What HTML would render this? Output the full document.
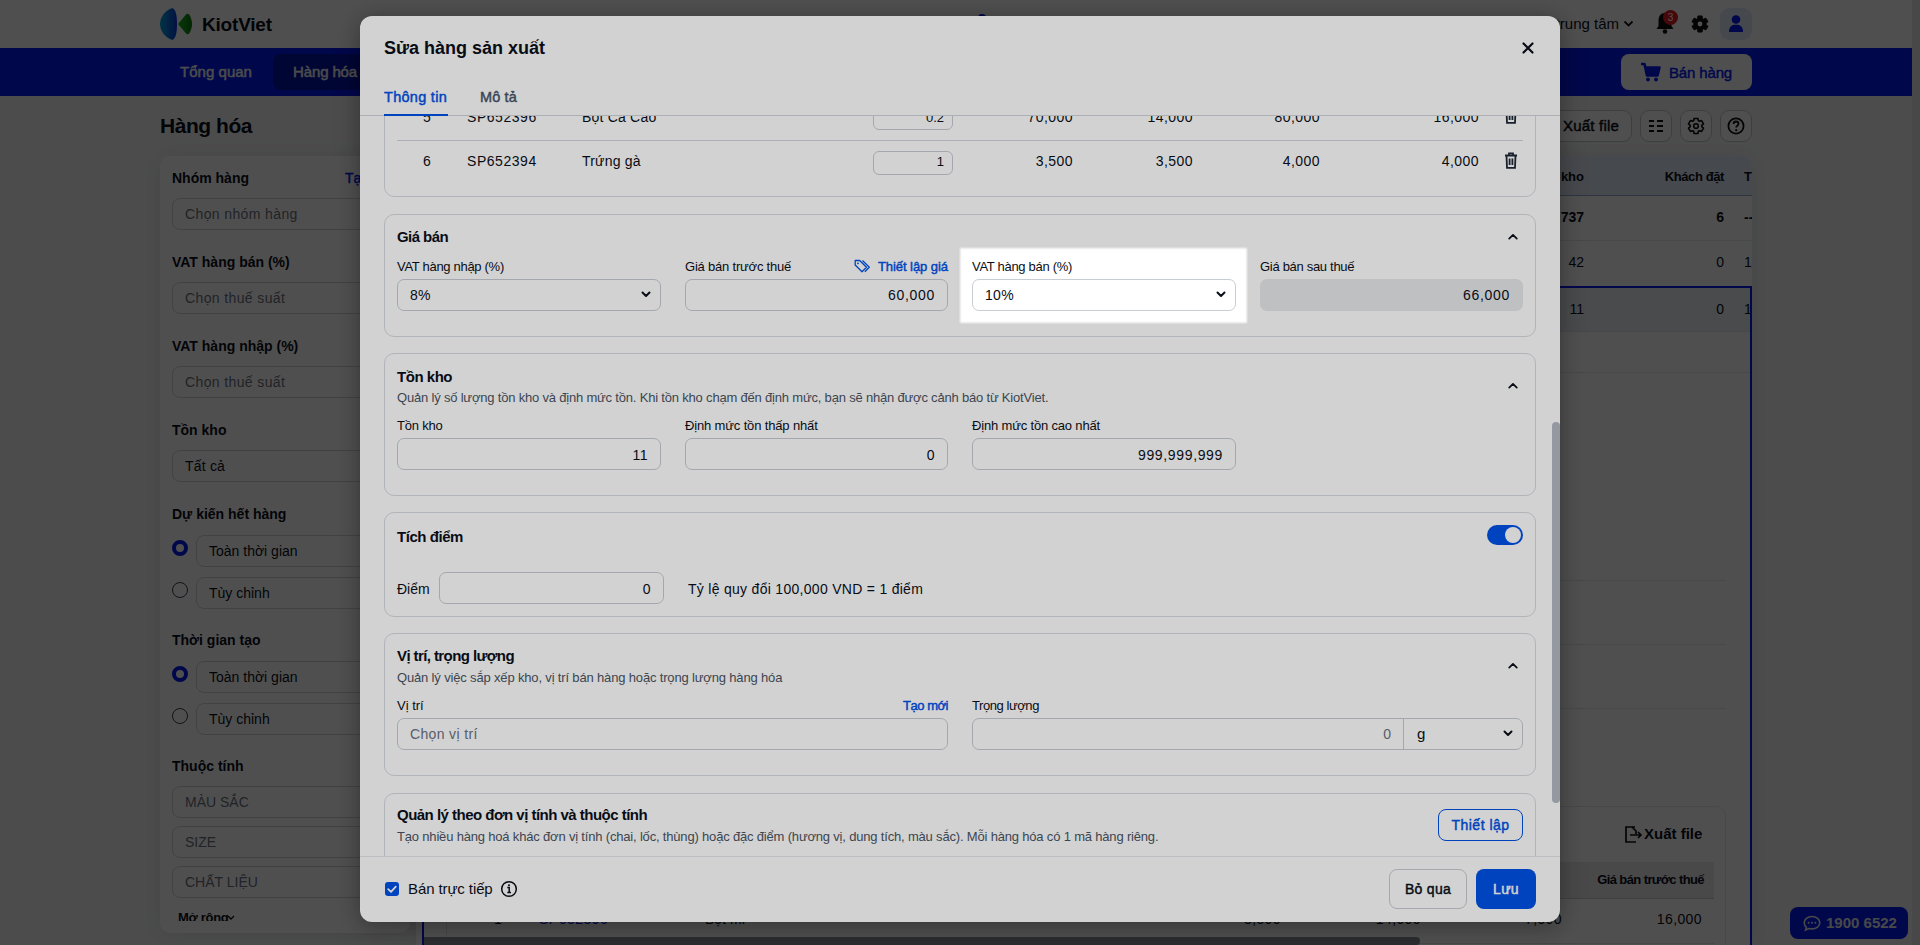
<!DOCTYPE html>
<html><head><meta charset="utf-8"><title>KiotViet</title>
<style>
html,body{margin:0;padding:0;width:1920px;height:945px;overflow:hidden;background:#fff;}
body{position:relative;font-family:"Liberation Sans",sans-serif;}
.a{position:absolute;}
.t{white-space:nowrap;}
#page{position:absolute;left:0;top:0;width:1920px;height:945px;z-index:0;}
svg{overflow:visible;}
</style></head><body>
<div id="page">
<div class="a " style="left:0px;top:0px;width:1912px;height:48px;background:#ffffff;"></div>
<svg class="a" style="left:160px;top:8px;" width="34" height="33" viewBox="0 0 34 33"><defs><linearGradient id="lg1" x1="0" y1="0" x2="1" y2="0"><stop offset="0" stop-color="#07a6e0"/><stop offset="1" stop-color="#0a3cd2"/></linearGradient><linearGradient id="lg2" x1="0" y1="0" x2="1" y2="0"><stop offset="0" stop-color="#1fb51f"/><stop offset="1" stop-color="#077a0c"/></linearGradient></defs><path d="M12.5 0 C5 2.5 0 9 0 16 C0 23 5 29.5 12.5 32 C16 30 17 24 17 16 C17 8 16 2 12.5 0 Z" fill="url(#lg1)"/><path d="M18 16 L26 6.5 C27 5.5 28.5 5.5 29.5 7 C31.2 10 32 13 32 16 C32 19 31.2 22 29.5 25 C28.5 26.5 27 26.5 26 25.5 Z" fill="url(#lg2)"/></svg>
<div class="a t" style="left:202.00px;top:14.91px;width:1000px;height:19px;line-height:19px;font-size:19px;font-weight:700;color:#0b0f19;text-align:left;letter-spacing:-0.2px;">KiotViet</div>
<div class="a t" style="left:1319.00px;top:16.30px;width:300px;height:15px;line-height:15px;font-size:15px;font-weight:400;color:#0b0f19;text-align:right;letter-spacing:0px;">Chi nhánh trung tâm</div>
<svg class="a" style="left:1623px;top:20px;" width="11" height="8" viewBox="0 0 11 8"><path d="M1.5 1.5 L5.5 5.5 L9.5 1.5" stroke="#111" stroke-width="1.8" fill="none"/></svg>
<svg class="a" style="left:1654px;top:8px;" width="22" height="28" viewBox="0 0 22 28"><path d="M11 5 C6.5 5 4.5 8.5 4.5 12.5 L4.5 18 L2.5 21 L19.5 21 L17.5 18 L17.5 12.5 C17.5 8.5 15.5 5 11 5 Z" fill="#111"/><circle cx="11" cy="23.5" r="2.3" fill="#111"/></svg>
<div class="a " style="left:1663px;top:10px;width:15px;height:15px;background:#e01b24;border-radius:50%;"></div>
<div class="a t" style="left:1663.00px;top:13.03px;width:15px;height:10px;line-height:10px;font-size:10px;font-weight:400;color:#ffffff;text-align:center;letter-spacing:0px;">3</div>
<svg class="a" style="left:1691px;top:15px;" width="18" height="18" viewBox="0 0 18 18"><path d="M6.55 3.52 L6.95 0.96 L11.05 0.96 L11.45 3.52 L12.52 4.14 L14.94 3.20 L16.99 6.76 L14.97 8.38 L14.97 9.62 L16.99 11.24 L14.94 14.80 L12.52 13.86 L11.45 14.48 L11.05 17.04 L6.95 17.04 L6.55 14.48 L5.48 13.86 L3.06 14.80 L1.01 11.24 L3.03 9.62 L3.03 8.38 L1.01 6.76 L3.06 3.20 L5.48 4.14 Z" fill="#111" stroke="#111" stroke-width="1" stroke-linejoin="round"/><circle cx="9" cy="9" r="2.4" fill="#fff"/></svg>
<div class="a " style="left:1720px;top:8px;width:32px;height:32px;background:#dde6f5;border-radius:9px;"></div>
<svg class="a" style="left:1728px;top:15px;" width="16" height="17" viewBox="0 0 16 17"><circle cx="8" cy="4.5" r="4.3" fill="#0019ef"/><path d="M1 17 C1 11.5 4 9.8 8 9.8 C12 9.8 15 11.5 15 17 Z" fill="#0019ef"/></svg>
<div class="a " style="left:978px;top:14px;width:8px;height:8px;background:#0019ef;border-radius:50%;"></div>
<div class="a " style="left:0px;top:48px;width:1912px;height:48px;background:#0019ef;"></div>
<div class="a t" style="left:180.00px;top:64.30px;width:1000px;height:15px;line-height:15px;font-size:15px;font-weight:400;color:#f3f4f6;text-align:left;letter-spacing:0.03px;-webkit-text-stroke:0.45px #f3f4f6;">Tổng quan</div>
<div class="a " style="left:273px;top:54px;width:110px;height:36px;background:#0016a8;border-radius:8px;"></div>
<div class="a t" style="left:293.00px;top:64.30px;width:1000px;height:15px;line-height:15px;font-size:15px;font-weight:400;color:#f3f4f6;text-align:left;letter-spacing:-0.13px;-webkit-text-stroke:0.45px #f3f4f6;">Hàng hóa</div>
<div class="a " style="left:1621px;top:54px;width:131px;height:36px;background:#ffffff;border-radius:8px;"></div>
<svg class="a" style="left:1640px;top:62px;" width="21" height="20" viewBox="0 0 21 20"><path d="M1 2 H4.5 L7 13.5 H17.5 L19.5 5.5 H5.5" stroke="#0019ef" stroke-width="2.6" fill="none" stroke-linejoin="round"/><path d="M5.5 5.5 H19.5 L17.5 13.5 H7 Z" fill="#0019ef"/><circle cx="8" cy="17.5" r="1.9" fill="#0019ef"/><circle cx="16" cy="17.5" r="1.9" fill="#0019ef"/></svg>
<div class="a t" style="left:1669.00px;top:64.80px;width:1000px;height:15px;line-height:15px;font-size:15px;font-weight:400;color:#0019ef;text-align:left;letter-spacing:-0.15px;-webkit-text-stroke:0.45px #0019ef;">Bán hàng</div>
<div class="a " style="left:0px;top:96px;width:1912px;height:849px;background:#f4f5f7;"></div>
<div class="a " style="left:1912px;top:0px;width:8px;height:945px;background:#e6e6e6;"></div>
<div class="a t" style="left:160.00px;top:115.22px;width:1000px;height:21px;line-height:21px;font-size:21px;font-weight:700;color:#0b0f19;text-align:left;letter-spacing:-0.46px;">Hàng hóa</div>
<div class="a " style="left:1500px;top:110px;width:132px;height:32px;background:#fff;border:1px solid #c2c7cf;border-radius:9px;box-sizing:border-box;"></div>
<div class="a t" style="left:1563.00px;top:118.30px;width:1000px;height:15px;line-height:15px;font-size:15px;font-weight:400;color:#0b0f19;text-align:left;letter-spacing:0.2px;-webkit-text-stroke:0.45px #0b0f19;">Xuất file</div>
<div class="a " style="left:1640px;top:110px;width:32px;height:32px;background:#fff;border:1px solid #c2c7cf;border-radius:9px;box-sizing:border-box;"></div>
<div class="a " style="left:1680px;top:110px;width:32px;height:32px;background:#fff;border:1px solid #c2c7cf;border-radius:9px;box-sizing:border-box;"></div>
<div class="a " style="left:1720px;top:110px;width:32px;height:32px;background:#fff;border:1px solid #c2c7cf;border-radius:9px;box-sizing:border-box;"></div>
<svg class="a" style="left:1648px;top:118px;" width="16" height="16" viewBox="0 0 16 16"><g fill="#111"><rect x="1" y="2" width="5" height="2"/><rect x="9" y="2" width="6" height="2"/><rect x="1" y="7" width="5" height="2"/><rect x="9" y="7" width="6" height="2"/><rect x="1" y="12" width="5" height="2"/><rect x="9" y="12" width="6" height="2"/></g></svg>
<svg class="a" style="left:1687px;top:117px;" width="18" height="18" viewBox="0 0 18 18"><path d="M6.63 3.70 L7.07 1.44 L10.93 1.44 L11.37 3.70 L12.40 4.30 L14.58 3.55 L16.51 6.89 L14.77 8.40 L14.77 9.60 L16.51 11.11 L14.58 14.45 L12.40 13.70 L11.37 14.30 L10.93 16.56 L7.07 16.56 L6.63 14.30 L5.60 13.70 L3.42 14.45 L1.49 11.11 L3.23 9.60 L3.23 8.40 L1.49 6.89 L3.42 3.55 L5.60 4.30 Z" fill="none" stroke="#111" stroke-width="1.6" stroke-linejoin="round"/><circle cx="9" cy="9" r="2.3" fill="none" stroke="#111" stroke-width="1.6"/></svg>
<svg class="a" style="left:1727px;top:117px;" width="18" height="18" viewBox="0 0 18 18"><circle cx="9" cy="9" r="7.6" fill="none" stroke="#111" stroke-width="1.8"/><path d="M6.6 7 C6.6 5.3 7.7 4.5 9 4.5 C10.5 4.5 11.5 5.4 11.5 6.8 C11.5 8.5 9.2 8.7 9.2 10.6" fill="none" stroke="#111" stroke-width="1.8"/><circle cx="9.2" cy="13.2" r="1.1" fill="#111"/></svg>
<div class="a " style="left:160px;top:156px;width:250px;height:777px;background:#fff;border-radius:10px;box-shadow:0 2px 24px rgba(0,0,0,0.10);"></div>
<div class="a t" style="left:172.00px;top:171.15px;width:1000px;height:14px;line-height:14px;font-size:14px;font-weight:700;color:#0b0f19;text-align:left;letter-spacing:0px;">Nhóm hàng</div>
<div class="a " style="left:172px;top:198px;width:224px;height:32px;border:1px solid #d1d5db;border-radius:8px;box-sizing:border-box;background:#fff;"></div>
<div class="a t" style="left:185.00px;top:207.15px;width:1000px;height:14px;line-height:14px;font-size:14px;font-weight:400;color:#6b7280;text-align:left;letter-spacing:0.38px;">Chọn nhóm hàng</div>
<div class="a t" style="left:172.00px;top:255.15px;width:1000px;height:14px;line-height:14px;font-size:14px;font-weight:700;color:#0b0f19;text-align:left;letter-spacing:0px;">VAT hàng bán (%)</div>
<div class="a " style="left:172px;top:282px;width:224px;height:32px;border:1px solid #d1d5db;border-radius:8px;box-sizing:border-box;background:#fff;"></div>
<div class="a t" style="left:185.00px;top:291.15px;width:1000px;height:14px;line-height:14px;font-size:14px;font-weight:400;color:#6b7280;text-align:left;letter-spacing:0.38px;">Chọn thuế suất</div>
<div class="a t" style="left:172.00px;top:339.15px;width:1000px;height:14px;line-height:14px;font-size:14px;font-weight:700;color:#0b0f19;text-align:left;letter-spacing:0px;">VAT hàng nhập (%)</div>
<div class="a " style="left:172px;top:366px;width:224px;height:32px;border:1px solid #d1d5db;border-radius:8px;box-sizing:border-box;background:#fff;"></div>
<div class="a t" style="left:185.00px;top:375.15px;width:1000px;height:14px;line-height:14px;font-size:14px;font-weight:400;color:#6b7280;text-align:left;letter-spacing:0.38px;">Chọn thuế suất</div>
<div class="a t" style="left:172.00px;top:423.15px;width:1000px;height:14px;line-height:14px;font-size:14px;font-weight:700;color:#0b0f19;text-align:left;letter-spacing:0px;">Tồn kho</div>
<div class="a " style="left:172px;top:450px;width:224px;height:32px;border:1px solid #d1d5db;border-radius:8px;box-sizing:border-box;background:#fff;"></div>
<div class="a t" style="left:185.00px;top:459.15px;width:1000px;height:14px;line-height:14px;font-size:14px;font-weight:400;color:#0b0f19;text-align:left;letter-spacing:0.2px;">Tất cả</div>
<div class="a t" style="left:345.00px;top:171.15px;width:1000px;height:14px;line-height:14px;font-size:14px;font-weight:400;color:#0019ef;text-align:left;letter-spacing:0px;-webkit-text-stroke:0.45px #0019ef;">Tạo mới</div>
<div class="a t" style="left:172.00px;top:507.15px;width:1000px;height:14px;line-height:14px;font-size:14px;font-weight:700;color:#0b0f19;text-align:left;letter-spacing:0px;">Dự kiến hết hàng</div>
<div class="a " style="left:172px;top:540px;width:16px;height:16px;border:4px solid #0019ef;border-radius:50%;box-sizing:border-box;background:#fff;"></div>
<div class="a " style="left:196px;top:535px;width:200px;height:32px;border:1px solid #d1d5db;border-radius:8px;box-sizing:border-box;"></div>
<div class="a t" style="left:209.00px;top:544.15px;width:1000px;height:14px;line-height:14px;font-size:14px;font-weight:400;color:#0b0f19;text-align:left;letter-spacing:0px;">Toàn thời gian</div>
<div class="a " style="left:172px;top:582px;width:16px;height:16px;border:1px solid #374151;border-radius:50%;box-sizing:border-box;background:#fff;"></div>
<div class="a " style="left:196px;top:577px;width:200px;height:32px;border:1px solid #d1d5db;border-radius:8px;box-sizing:border-box;"></div>
<div class="a t" style="left:209.00px;top:586.15px;width:1000px;height:14px;line-height:14px;font-size:14px;font-weight:400;color:#0b0f19;text-align:left;letter-spacing:0px;">Tùy chỉnh</div>
<div class="a t" style="left:172.00px;top:633.15px;width:1000px;height:14px;line-height:14px;font-size:14px;font-weight:700;color:#0b0f19;text-align:left;letter-spacing:0px;">Thời gian tạo</div>
<div class="a " style="left:172px;top:666px;width:16px;height:16px;border:4px solid #0019ef;border-radius:50%;box-sizing:border-box;background:#fff;"></div>
<div class="a " style="left:196px;top:661px;width:200px;height:32px;border:1px solid #d1d5db;border-radius:8px;box-sizing:border-box;"></div>
<div class="a t" style="left:209.00px;top:670.15px;width:1000px;height:14px;line-height:14px;font-size:14px;font-weight:400;color:#0b0f19;text-align:left;letter-spacing:0px;">Toàn thời gian</div>
<div class="a " style="left:172px;top:708px;width:16px;height:16px;border:1px solid #374151;border-radius:50%;box-sizing:border-box;background:#fff;"></div>
<div class="a " style="left:196px;top:703px;width:200px;height:32px;border:1px solid #d1d5db;border-radius:8px;box-sizing:border-box;"></div>
<div class="a t" style="left:209.00px;top:712.15px;width:1000px;height:14px;line-height:14px;font-size:14px;font-weight:400;color:#0b0f19;text-align:left;letter-spacing:0px;">Tùy chỉnh</div>
<div class="a t" style="left:172.00px;top:759.15px;width:1000px;height:14px;line-height:14px;font-size:14px;font-weight:700;color:#0b0f19;text-align:left;letter-spacing:0px;">Thuộc tính</div>
<div class="a " style="left:172px;top:786px;width:224px;height:32px;border:1px solid #d1d5db;border-radius:8px;box-sizing:border-box;"></div>
<div class="a t" style="left:185.00px;top:795.15px;width:1000px;height:14px;line-height:14px;font-size:14px;font-weight:400;color:#6b7280;text-align:left;letter-spacing:0px;">MÀU SẮC</div>
<div class="a " style="left:172px;top:826px;width:224px;height:32px;border:1px solid #d1d5db;border-radius:8px;box-sizing:border-box;"></div>
<div class="a t" style="left:185.00px;top:835.15px;width:1000px;height:14px;line-height:14px;font-size:14px;font-weight:400;color:#6b7280;text-align:left;letter-spacing:0px;">SIZE</div>
<div class="a " style="left:172px;top:866px;width:224px;height:32px;border:1px solid #d1d5db;border-radius:8px;box-sizing:border-box;"></div>
<div class="a t" style="left:185.00px;top:875.15px;width:1000px;height:14px;line-height:14px;font-size:14px;font-weight:400;color:#6b7280;text-align:left;letter-spacing:0px;">CHẤT LIỆU</div>
<div class="a " style="left:160px;top:890px;width:248px;height:31px;overflow:hidden;">
<div class="a t" style="left:18.00px;top:21.29px;width:1000px;height:13px;line-height:13px;font-size:13px;font-weight:700;color:#0b0f19;text-align:left;letter-spacing:-0.3px;">Mở rộng</div>
<svg class="a" style="left:67px;top:24.5px;" width="8" height="6" viewBox="0 0 8 6"><path d="M1 1 L4 4 L7 1" stroke="#111" stroke-width="1.3" fill="none"/></svg>
</div>
<div class="a " style="left:416px;top:156px;width:1336px;height:789px;border-radius:10px 10px 0 0;background:#fff;box-shadow:0 2px 24px rgba(0,0,0,0.10);"></div>
<div class="a " style="left:416px;top:156px;width:1336px;height:789px;overflow:hidden;border-radius:10px 10px 0 0;background:#fff;">
<div class="a " style="left:0px;top:0px;width:1336px;height:40px;background:#e3eaf6;border-bottom:1px solid #93a9d3;box-sizing:border-box;"></div>
<div class="a t" style="left:968.00px;top:13.99px;width:200px;height:13px;line-height:13px;font-size:13px;font-weight:700;color:#0b0f19;text-align:right;letter-spacing:0px;">Tồn kho</div>
<div class="a t" style="left:1108.00px;top:13.99px;width:200px;height:13px;line-height:13px;font-size:13px;font-weight:700;color:#0b0f19;text-align:right;letter-spacing:-0.4px;">Khách đặt</div>
<div class="a t" style="left:1328.00px;top:13.99px;width:1000px;height:13px;line-height:13px;font-size:13px;font-weight:700;color:#0b0f19;text-align:left;letter-spacing:0px;">Tạo</div>
<div class="a " style="left:0px;top:84px;width:1336px;height:1px;background:#e5e7eb;"></div>
<div class="a t" style="left:968.00px;top:54.15px;width:200px;height:14px;line-height:14px;font-size:14px;font-weight:700;color:#0b0f19;text-align:right;letter-spacing:0px;">1,737</div>
<div class="a t" style="left:1108.00px;top:54.15px;width:200px;height:14px;line-height:14px;font-size:14px;font-weight:700;color:#0b0f19;text-align:right;letter-spacing:0px;">6</div>
<div class="a t" style="left:1328.00px;top:54.15px;width:1000px;height:14px;line-height:14px;font-size:14px;font-weight:700;color:#0b0f19;text-align:left;letter-spacing:0px;">---</div>
<div class="a t" style="left:968.00px;top:99.15px;width:200px;height:14px;line-height:14px;font-size:14px;font-weight:400;color:#0b0f19;text-align:right;letter-spacing:0px;">42</div>
<div class="a t" style="left:1108.00px;top:99.15px;width:200px;height:14px;line-height:14px;font-size:14px;font-weight:400;color:#0b0f19;text-align:right;letter-spacing:0px;">0</div>
<div class="a t" style="left:1328.00px;top:99.15px;width:1000px;height:14px;line-height:14px;font-size:14px;font-weight:400;color:#0b0f19;text-align:left;letter-spacing:0px;">14</div>
<div class="a " style="left:6px;top:130px;width:1330px;height:700px;border:2px solid #0019ef;box-sizing:border-box;z-index:2;"></div>
<div class="a " style="left:8px;top:132px;width:1326px;height:44px;background:#e9eef7;"></div>
<div class="a t" style="left:968.00px;top:146.15px;width:200px;height:14px;line-height:14px;font-size:14px;font-weight:400;color:#0b0f19;text-align:right;letter-spacing:0px;">11</div>
<div class="a t" style="left:1108.00px;top:146.15px;width:200px;height:14px;line-height:14px;font-size:14px;font-weight:400;color:#0b0f19;text-align:right;letter-spacing:0px;">0</div>
<div class="a t" style="left:1328.00px;top:146.15px;width:1000px;height:14px;line-height:14px;font-size:14px;font-weight:400;color:#0b0f19;text-align:left;letter-spacing:0px;">14</div>
<div class="a " style="left:8px;top:175px;width:1326px;height:1px;background:#e5e7eb;"></div>
<div class="a " style="left:8px;top:216px;width:1326px;height:1px;background:#e5e7eb;"></div>
<div class="a " style="left:30px;top:424px;width:1280px;height:1px;background:#e5e7eb;"></div>
<div class="a " style="left:30px;top:488px;width:1280px;height:1px;background:#e5e7eb;"></div>
<div class="a " style="left:30px;top:552px;width:1280px;height:1px;background:#e5e7eb;"></div>
<div class="a " style="left:30px;top:650px;width:1280px;height:200px;border:1px solid #e5e7eb;border-radius:10px;box-sizing:border-box;"></div>
<svg class="a" style="left:1208px;top:670px;" width="20" height="17" viewBox="0 0 20 17"><path d="M11 1 H2 V16 H12" stroke="#111" stroke-width="1.7" fill="none"/><path d="M8 1 L12 5 V8" stroke="#111" stroke-width="1.7" fill="none"/><path d="M6 9 H17 M14 6 L17 9 L14 12" stroke="#111" stroke-width="1.7" fill="none"/></svg>
<div class="a t" style="left:1228.00px;top:670.30px;width:1000px;height:15px;line-height:15px;font-size:15px;font-weight:700;color:#0b0f19;text-align:left;letter-spacing:0px;">Xuất file</div>
<div class="a " style="left:31px;top:706px;width:1267px;height:37px;background:#e9eaed;border-bottom:1px solid #c9ccd2;box-sizing:border-box;"></div>
<div class="a " style="left:31px;top:787px;width:1267px;height:1px;background:#e5e7eb;"></div>
<div class="a t" style="left:1088.00px;top:716.99px;width:200px;height:13px;line-height:13px;font-size:13px;font-weight:700;color:#0b0f19;text-align:right;letter-spacing:-0.6px;">Giá bán trước thuế</div>
<div class="a t" style="left:1086.00px;top:756.15px;width:200px;height:14px;line-height:14px;font-size:14px;font-weight:400;color:#0b0f19;text-align:right;letter-spacing:0.4px;">16,000</div>
<div class="a t" style="left:665.00px;top:756.15px;width:200px;height:14px;line-height:14px;font-size:14px;font-weight:400;color:#0b0f19;text-align:right;letter-spacing:0.4px;">3,500</div>
<div class="a t" style="left:805.00px;top:756.15px;width:200px;height:14px;line-height:14px;font-size:14px;font-weight:400;color:#0b0f19;text-align:right;letter-spacing:0.4px;">14,000</div>
<div class="a t" style="left:946.00px;top:756.15px;width:200px;height:14px;line-height:14px;font-size:14px;font-weight:400;color:#0b0f19;text-align:right;letter-spacing:0.4px;">7,500</div>
<div class="a t" style="left:78.00px;top:756.15px;width:1000px;height:14px;line-height:14px;font-size:14px;font-weight:400;color:#0b0f19;text-align:left;letter-spacing:0px;">1</div>
<div class="a t" style="left:123.00px;top:756.15px;width:1000px;height:14px;line-height:14px;font-size:14px;font-weight:400;color:#0019ef;text-align:left;letter-spacing:0.5px;">SP652396</div>
<div class="a t" style="left:289.00px;top:756.15px;width:1000px;height:14px;line-height:14px;font-size:14px;font-weight:400;color:#0b0f19;text-align:left;letter-spacing:0px;">Bột mì</div>
<div class="a " style="left:30px;top:742px;width:1px;height:47px;background:#e5e7eb;"></div>
<div class="a " style="left:8px;top:781px;width:996px;height:8px;background:#8b9099;border-radius:0 4px 4px 0;"></div>
</div>
<div class="a " style="left:1790px;top:907px;width:118px;height:32px;background:#0019ef;border-radius:8px;"></div>
<svg class="a" style="left:1803px;top:915px;" width="18" height="16" viewBox="0 0 18 16"><path d="M9 1.5 C4.5 1.5 1.2 4.3 1.2 7.8 C1.2 9.6 2 11.2 3.4 12.3 L2.6 15 L6 13.5 C6.9 13.8 7.9 13.9 9 13.9 C13.5 13.9 16.8 11.2 16.8 7.8 C16.8 4.3 13.5 1.5 9 1.5 Z" fill="none" stroke="#e5e7eb" stroke-width="1.6"/><circle cx="5.6" cy="7.8" r="1" fill="#e5e7eb"/><circle cx="9" cy="7.8" r="1" fill="#e5e7eb"/><circle cx="12.4" cy="7.8" r="1" fill="#e5e7eb"/></svg>
<div class="a t" style="left:1826.00px;top:915.30px;width:1000px;height:15px;line-height:15px;font-size:15px;font-weight:700;color:#e5e7eb;text-align:left;letter-spacing:0px;">1900 6522</div>
</div>
<div class="a " style="left:0px;top:0px;width:1920px;height:945px;background:rgba(0,0,0,0.62);"></div>
<div class="a " style="left:360px;top:16px;width:1200px;height:906px;background:#fff;border-radius:12px;box-shadow:0 4px 24px rgba(0,0,0,0.35);overflow:hidden;">
<div class="a t" style="left:24.00px;top:22.76px;width:1000px;height:18px;line-height:18px;font-size:18px;font-weight:700;color:#0b0f19;text-align:left;letter-spacing:0px;">Sửa hàng sản xuất</div>
<svg class="a" style="left:1162px;top:26px;" width="12" height="12" viewBox="0 0 12 12"><path d="M1.5 1.5 L10.5 10.5 M10.5 1.5 L1.5 10.5" stroke="#0b0f19" stroke-width="2.2" stroke-linecap="round"/></svg>
<div class="a t" style="left:24.00px;top:73.72px;width:1000px;height:14.5px;line-height:14.5px;font-size:14.5px;font-weight:400;color:#0052e8;text-align:left;letter-spacing:0.28px;-webkit-text-stroke:0.45px #0052e8;">Thông tin</div>
<div class="a t" style="left:120.00px;top:73.72px;width:1000px;height:14.5px;line-height:14.5px;font-size:14.5px;font-weight:400;color:#475569;text-align:left;letter-spacing:0.15px;-webkit-text-stroke:0.45px #475569;">Mô tả</div>
<div class="a " style="left:0px;top:99px;width:1200px;height:1px;background:#d1d5db;"></div>
<div class="a " style="left:24px;top:98px;width:64px;height:2px;background:#0052e8;"></div>
<div class="a " style="left:0px;top:100px;width:1200px;height:740px;overflow:hidden;">
<div class="a " style="left:24px;top:-216px;width:1152px;height:297px;border:1px solid #d7dbe0;border-radius:10px;box-sizing:border-box;"></div>
<div class="a t" style="left:47.00px;top:-5.85px;width:40px;height:14px;line-height:14px;font-size:14px;font-weight:400;color:#0b0f19;text-align:center;letter-spacing:0px;">5</div>
<div class="a t" style="left:107.00px;top:-5.85px;width:1000px;height:14px;line-height:14px;font-size:14px;font-weight:400;color:#0b0f19;text-align:left;letter-spacing:0.55px;">SP652396</div>
<div class="a t" style="left:222.00px;top:-5.85px;width:1000px;height:14px;line-height:14px;font-size:14px;font-weight:400;color:#0b0f19;text-align:left;letter-spacing:0.2px;">Bột Ca Cao</div>
<div class="a " style="left:513px;top:-10px;width:80px;height:24px;border:1px solid #c8cdd4;border-radius:7px;box-sizing:border-box;border-radius:6px;"></div>
<div class="a t" style="left:484.00px;top:-5.01px;width:100px;height:13px;line-height:13px;font-size:13px;font-weight:400;color:#0b0f19;text-align:right;letter-spacing:0px;">0.2</div>
<div class="a t" style="left:513.00px;top:-5.85px;width:200px;height:14px;line-height:14px;font-size:14px;font-weight:400;color:#0b0f19;text-align:right;letter-spacing:0.45px;">70,000</div>
<div class="a t" style="left:633.00px;top:-5.85px;width:200px;height:14px;line-height:14px;font-size:14px;font-weight:400;color:#0b0f19;text-align:right;letter-spacing:0.45px;">14,000</div>
<div class="a t" style="left:760.00px;top:-5.85px;width:200px;height:14px;line-height:14px;font-size:14px;font-weight:400;color:#0b0f19;text-align:right;letter-spacing:0.45px;">80,000</div>
<div class="a t" style="left:919.00px;top:-5.85px;width:200px;height:14px;line-height:14px;font-size:14px;font-weight:400;color:#0b0f19;text-align:right;letter-spacing:0.45px;">16,000</div>
<svg class="a" style="left:1144px;top:-9px;" width="14" height="17" viewBox="0 0 14 17"><g fill="none" stroke="#1f2937" stroke-width="1.8"><path d="M1 3.5 H13"/><path d="M5 3.5 V1.3 H9 V3.5"/><path d="M2.5 3.5 L3 15.8 H11 L11.5 3.5"/><path d="M5.6 6.5 V13 M8.4 6.5 V13"/></g></svg>
<div class="a t" style="left:47.00px;top:38.15px;width:40px;height:14px;line-height:14px;font-size:14px;font-weight:400;color:#0b0f19;text-align:center;letter-spacing:0px;">6</div>
<div class="a t" style="left:107.00px;top:38.15px;width:1000px;height:14px;line-height:14px;font-size:14px;font-weight:400;color:#0b0f19;text-align:left;letter-spacing:0.55px;">SP652394</div>
<div class="a t" style="left:222.00px;top:38.15px;width:1000px;height:14px;line-height:14px;font-size:14px;font-weight:400;color:#0b0f19;text-align:left;letter-spacing:0.2px;">Trứng gà</div>
<div class="a " style="left:513px;top:35px;width:80px;height:24px;border:1px solid #c8cdd4;border-radius:7px;box-sizing:border-box;border-radius:6px;"></div>
<div class="a t" style="left:484.00px;top:38.99px;width:100px;height:13px;line-height:13px;font-size:13px;font-weight:400;color:#0b0f19;text-align:right;letter-spacing:0px;">1</div>
<div class="a t" style="left:513.00px;top:38.15px;width:200px;height:14px;line-height:14px;font-size:14px;font-weight:400;color:#0b0f19;text-align:right;letter-spacing:0.45px;">3,500</div>
<div class="a t" style="left:633.00px;top:38.15px;width:200px;height:14px;line-height:14px;font-size:14px;font-weight:400;color:#0b0f19;text-align:right;letter-spacing:0.45px;">3,500</div>
<div class="a t" style="left:760.00px;top:38.15px;width:200px;height:14px;line-height:14px;font-size:14px;font-weight:400;color:#0b0f19;text-align:right;letter-spacing:0.45px;">4,000</div>
<div class="a t" style="left:919.00px;top:38.15px;width:200px;height:14px;line-height:14px;font-size:14px;font-weight:400;color:#0b0f19;text-align:right;letter-spacing:0.45px;">4,000</div>
<svg class="a" style="left:1144px;top:36px;" width="14" height="17" viewBox="0 0 14 17"><g fill="none" stroke="#1f2937" stroke-width="1.8"><path d="M1 3.5 H13"/><path d="M5 3.5 V1.3 H9 V3.5"/><path d="M2.5 3.5 L3 15.8 H11 L11.5 3.5"/><path d="M5.6 6.5 V13 M8.4 6.5 V13"/></g></svg>
<div class="a " style="left:37px;top:24px;width:1126px;height:1px;background:#d1d5db;"></div>
<div class="a " style="left:24px;top:98px;width:1152px;height:123px;border:1px solid #d7dbe0;border-radius:10px;box-sizing:border-box;"></div>
<div class="a t" style="left:37.00px;top:113.30px;width:1000px;height:15px;line-height:15px;font-size:15px;font-weight:700;color:#0b0f19;text-align:left;letter-spacing:-0.57px;">Giá bán</div>
<svg class="a" style="left:1148px;top:116.5px;" width="10" height="7" viewBox="0 0 10 7"><path d="M1.2 5.6 L5 1.8 L8.8 5.6" stroke="#0b0f19" stroke-width="1.7" fill="none" stroke-linecap="round" stroke-linejoin="round"/></svg>
<div class="a t" style="left:37.00px;top:143.99px;width:1000px;height:13px;line-height:13px;font-size:13px;font-weight:400;color:#0b0f19;text-align:left;letter-spacing:-0.3px;">VAT hàng nhập (%)</div>
<div class="a t" style="left:325.00px;top:143.99px;width:1000px;height:13px;line-height:13px;font-size:13px;font-weight:400;color:#0b0f19;text-align:left;letter-spacing:-0.2px;">Giá bán trước thuế</div>
<svg class="a" style="left:494px;top:143px;" width="18" height="15" viewBox="0 0 18 15"><g fill="none" stroke="#0052e8" stroke-width="1.3" stroke-linejoin="round"><path d="M1.2 1.5 V6 L8 12.8 L12.5 8.3 L5.7 1.5 Z"/><path d="M8.5 1.5 L15.3 8.3 L10.8 12.8"/></g><circle cx="4" cy="4.3" r="0.9" fill="#0052e8"/></svg>
<div class="a t" style="left:388.00px;top:143.99px;width:200px;height:13px;line-height:13px;font-size:13px;font-weight:400;color:#0052e8;text-align:right;letter-spacing:-0.06px;-webkit-text-stroke:0.45px #0052e8;">Thiết lập giá</div>
<div class="a t" style="left:612.00px;top:143.99px;width:1000px;height:13px;line-height:13px;font-size:13px;font-weight:400;color:#0b0f19;text-align:left;letter-spacing:-0.3px;">VAT hàng bán (%)</div>
<div class="a t" style="left:900.00px;top:143.99px;width:1000px;height:13px;line-height:13px;font-size:13px;font-weight:400;color:#0b0f19;text-align:left;letter-spacing:-0.3px;">Giá bán sau thuế</div>
<div class="a " style="left:37px;top:163px;width:264px;height:32px;border:1px solid #c8cdd4;border-radius:7px;box-sizing:border-box;"></div>
<div class="a t" style="left:50.00px;top:172.15px;width:1000px;height:14px;line-height:14px;font-size:14px;font-weight:400;color:#0b0f19;text-align:left;letter-spacing:0.3px;">8%</div>
<svg class="a" style="left:281px;top:175.0px;" width="10" height="7" viewBox="0 0 10 7"><path d="M1.5 1.5 L5 5 L8.5 1.5" stroke="#0b0f19" stroke-width="2" fill="none" stroke-linecap="round" stroke-linejoin="round"/></svg>
<div class="a " style="left:325px;top:163px;width:263px;height:32px;border:1px solid #c8cdd4;border-radius:7px;box-sizing:border-box;"></div>
<div class="a t" style="left:375.00px;top:172.15px;width:200px;height:14px;line-height:14px;font-size:14px;font-weight:400;color:#0b0f19;text-align:right;letter-spacing:0.7px;">60,000</div>
<div class="a " style="left:612px;top:163px;width:264px;height:32px;border:1px solid #c8cdd4;border-radius:7px;box-sizing:border-box;"></div>
<div class="a t" style="left:625.00px;top:172.15px;width:1000px;height:14px;line-height:14px;font-size:14px;font-weight:400;color:#0b0f19;text-align:left;letter-spacing:0.3px;">10%</div>
<svg class="a" style="left:856px;top:175.0px;" width="10" height="7" viewBox="0 0 10 7"><path d="M1.5 1.5 L5 5 L8.5 1.5" stroke="#0b0f19" stroke-width="2" fill="none" stroke-linecap="round" stroke-linejoin="round"/></svg>
<div class="a " style="left:900px;top:163px;width:263px;height:32px;background:#e8e9ec;border-radius:7px;"></div>
<div class="a t" style="left:950.00px;top:172.15px;width:200px;height:14px;line-height:14px;font-size:14px;font-weight:400;color:#0b0f19;text-align:right;letter-spacing:0.7px;">66,000</div>
<div class="a " style="left:24px;top:237px;width:1152px;height:143px;border:1px solid #d7dbe0;border-radius:10px;box-sizing:border-box;"></div>
<div class="a t" style="left:37.00px;top:252.80px;width:1000px;height:15px;line-height:15px;font-size:15px;font-weight:700;color:#0b0f19;text-align:left;letter-spacing:-0.47px;">Tồn kho</div>
<svg class="a" style="left:1148px;top:265.5px;" width="10" height="7" viewBox="0 0 10 7"><path d="M1.2 5.6 L5 1.8 L8.8 5.6" stroke="#0b0f19" stroke-width="1.7" fill="none" stroke-linecap="round" stroke-linejoin="round"/></svg>
<div class="a t" style="left:37.00px;top:274.99px;width:1000px;height:13px;line-height:13px;font-size:13px;font-weight:400;color:#4b5563;text-align:left;letter-spacing:-0.19px;">Quản lý số lượng tồn kho và định mức tồn. Khi tồn kho chạm đến định mức, bạn sẽ nhận được cảnh báo từ KiotViet.</div>
<div class="a t" style="left:37.00px;top:303.49px;width:1000px;height:13px;line-height:13px;font-size:13px;font-weight:400;color:#0b0f19;text-align:left;letter-spacing:-0.2px;">Tồn kho</div>
<div class="a t" style="left:325.00px;top:303.49px;width:1000px;height:13px;line-height:13px;font-size:13px;font-weight:400;color:#0b0f19;text-align:left;letter-spacing:-0.15px;">Định mức tồn thấp nhất</div>
<div class="a t" style="left:612.00px;top:303.49px;width:1000px;height:13px;line-height:13px;font-size:13px;font-weight:400;color:#0b0f19;text-align:left;letter-spacing:-0.17px;">Định mức tồn cao nhất</div>
<div class="a " style="left:37px;top:322px;width:264px;height:32px;border:1px solid #c8cdd4;border-radius:7px;box-sizing:border-box;"></div>
<div class="a t" style="left:88.00px;top:331.65px;width:200px;height:14px;line-height:14px;font-size:14px;font-weight:400;color:#0b0f19;text-align:right;letter-spacing:0.5px;">11</div>
<div class="a " style="left:325px;top:322px;width:263px;height:32px;border:1px solid #c8cdd4;border-radius:7px;box-sizing:border-box;"></div>
<div class="a t" style="left:375.00px;top:331.65px;width:200px;height:14px;line-height:14px;font-size:14px;font-weight:400;color:#0b0f19;text-align:right;letter-spacing:0.5px;">0</div>
<div class="a " style="left:612px;top:322px;width:264px;height:32px;border:1px solid #c8cdd4;border-radius:7px;box-sizing:border-box;"></div>
<div class="a t" style="left:663.00px;top:331.65px;width:200px;height:14px;line-height:14px;font-size:14px;font-weight:400;color:#0b0f19;text-align:right;letter-spacing:0.65px;">999,999,999</div>
<div class="a " style="left:24px;top:396px;width:1152px;height:105px;border:1px solid #d7dbe0;border-radius:10px;box-sizing:border-box;"></div>
<div class="a t" style="left:37.00px;top:413.30px;width:1000px;height:15px;line-height:15px;font-size:15px;font-weight:700;color:#0b0f19;text-align:left;letter-spacing:-0.45px;">Tích điểm</div>
<div class="a " style="left:1127px;top:409px;width:36px;height:20px;background:#0052e8;border-radius:10px;"></div>
<div class="a " style="left:1145px;top:411px;width:16px;height:16px;background:#fff;border-radius:50%;"></div>
<div class="a t" style="left:37.00px;top:466.15px;width:1000px;height:14px;line-height:14px;font-size:14px;font-weight:400;color:#0b0f19;text-align:left;letter-spacing:0px;">Điểm</div>
<div class="a " style="left:79px;top:456px;width:225px;height:32px;border:1px solid #c8cdd4;border-radius:7px;box-sizing:border-box;"></div>
<div class="a t" style="left:191.00px;top:465.65px;width:100px;height:14px;line-height:14px;font-size:14px;font-weight:400;color:#0b0f19;text-align:right;letter-spacing:0.5px;">0</div>
<div class="a t" style="left:328.00px;top:466.15px;width:1000px;height:14px;line-height:14px;font-size:14px;font-weight:400;color:#0b0f19;text-align:left;letter-spacing:0.29px;">Tỷ lệ quy đổi 100,000 VND = 1 điểm</div>
<div class="a " style="left:24px;top:517px;width:1152px;height:143px;border:1px solid #d7dbe0;border-radius:10px;box-sizing:border-box;"></div>
<div class="a t" style="left:37.00px;top:532.30px;width:1000px;height:15px;line-height:15px;font-size:15px;font-weight:700;color:#0b0f19;text-align:left;letter-spacing:-0.59px;">Vị trí, trọng lượng</div>
<svg class="a" style="left:1148px;top:545.5px;" width="10" height="7" viewBox="0 0 10 7"><path d="M1.2 5.6 L5 1.8 L8.8 5.6" stroke="#0b0f19" stroke-width="1.7" fill="none" stroke-linecap="round" stroke-linejoin="round"/></svg>
<div class="a t" style="left:37.00px;top:554.99px;width:1000px;height:13px;line-height:13px;font-size:13px;font-weight:400;color:#4b5563;text-align:left;letter-spacing:-0.16px;">Quản lý việc sắp xếp kho, vị trí bán hàng hoặc trọng lượng hàng hóa</div>
<div class="a t" style="left:37.00px;top:582.99px;width:1000px;height:13px;line-height:13px;font-size:13px;font-weight:400;color:#0b0f19;text-align:left;letter-spacing:0px;">Vị trí</div>
<div class="a t" style="left:388.00px;top:582.99px;width:200px;height:13px;line-height:13px;font-size:13px;font-weight:400;color:#0052e8;text-align:right;letter-spacing:-0.47px;-webkit-text-stroke:0.45px #0052e8;">Tạo mới</div>
<div class="a " style="left:37px;top:602px;width:551px;height:32px;border:1px solid #c8cdd4;border-radius:7px;box-sizing:border-box;"></div>
<div class="a t" style="left:50.00px;top:611.15px;width:1000px;height:14px;line-height:14px;font-size:14px;font-weight:400;color:#6b7280;text-align:left;letter-spacing:0.35px;">Chọn vị trí</div>
<div class="a t" style="left:612.00px;top:582.99px;width:1000px;height:13px;line-height:13px;font-size:13px;font-weight:400;color:#0b0f19;text-align:left;letter-spacing:-0.43px;">Trọng lượng</div>
<div class="a " style="left:612px;top:602px;width:551px;height:32px;border:1px solid #c8cdd4;border-radius:7px;box-sizing:border-box;"></div>
<div class="a " style="left:1043px;top:602px;width:1px;height:32px;background:#c8cdd4;"></div>
<div class="a t" style="left:931.00px;top:611.15px;width:100px;height:14px;line-height:14px;font-size:14px;font-weight:400;color:#6b7280;text-align:right;letter-spacing:0px;">0</div>
<div class="a t" style="left:1057.00px;top:610.30px;width:1000px;height:15px;line-height:15px;font-size:15px;font-weight:400;color:#0b0f19;text-align:left;letter-spacing:0px;">g</div>
<svg class="a" style="left:1143px;top:614.0px;" width="10" height="7" viewBox="0 0 10 7"><path d="M1.5 1.5 L5 5 L8.5 1.5" stroke="#0b0f19" stroke-width="2" fill="none" stroke-linecap="round" stroke-linejoin="round"/></svg>
<div class="a " style="left:24px;top:677px;width:1152px;height:100px;border:1px solid #d7dbe0;border-radius:10px;box-sizing:border-box;"></div>
<div class="a t" style="left:37.00px;top:691.30px;width:1000px;height:15px;line-height:15px;font-size:15px;font-weight:700;color:#0b0f19;text-align:left;letter-spacing:-0.52px;">Quản lý theo đơn vị tính và thuộc tính</div>
<div class="a t" style="left:37.00px;top:713.99px;width:1000px;height:13px;line-height:13px;font-size:13px;font-weight:400;color:#4b5563;text-align:left;letter-spacing:-0.18px;">Tạo nhiều hàng hoá khác đơn vị tính (chai, lốc, thùng) hoặc đặc điểm (hương vị, dung tích, màu sắc). Mỗi hàng hóa có 1 mã hàng riêng.</div>
<div class="a " style="left:1078px;top:693px;width:85px;height:32px;border:1.5px solid #0052e8;border-radius:8px;box-sizing:border-box;"></div>
<div class="a t" style="left:1078.00px;top:702.15px;width:85px;height:14px;line-height:14px;font-size:14px;font-weight:400;color:#0052e8;text-align:center;letter-spacing:0.48px;-webkit-text-stroke:0.45px #0052e8;">Thiết lập</div>
</div>
<div class="a " style="left:1192px;top:406px;width:8px;height:381px;background:#b3b9c4;border-radius:4px;"></div>
<div class="a " style="left:0px;top:840px;width:1200px;height:1px;background:#e5e7eb;"></div>
<div class="a " style="left:25px;top:866px;width:14px;height:14px;background:#0052e8;border-radius:3px;"></div>
<svg class="a" style="left:25px;top:866px;" width="14" height="14" viewBox="0 0 14 14"><path d="M3.2 7.2 L6 9.8 L10.8 4.6" stroke="#fff" stroke-width="1.8" fill="none" stroke-linecap="round" stroke-linejoin="round"/></svg>
<div class="a t" style="left:48.00px;top:865.30px;width:1000px;height:15px;line-height:15px;font-size:15px;font-weight:400;color:#0b0f19;text-align:left;letter-spacing:-0.1px;">Bán trực tiếp</div>
<svg class="a" style="left:140px;top:864px;" width="18" height="18" viewBox="0 0 18 18"><circle cx="9" cy="9" r="7.3" fill="none" stroke="#0b0f19" stroke-width="1.5"/><path d="M7.3 7.6 H9.2 V12.6 M7.3 12.6 H11" stroke="#0b0f19" stroke-width="1.5" fill="none"/><circle cx="9" cy="5.3" r="1" fill="#0b0f19"/></svg>
<div class="a " style="left:1029px;top:853px;width:78px;height:40px;border:1px solid #c9cdd3;border-radius:8px;box-sizing:border-box;background:#fff;"></div>
<div class="a t" style="left:1029.00px;top:866.15px;width:78px;height:14px;line-height:14px;font-size:14px;font-weight:400;color:#0b0f19;text-align:center;letter-spacing:0.27px;-webkit-text-stroke:0.45px #0b0f19;">Bỏ qua</div>
<div class="a " style="left:1116px;top:853px;width:60px;height:40px;background:#0052e8;border-radius:8px;"></div>
<div class="a t" style="left:1116.00px;top:866.15px;width:60px;height:14px;line-height:14px;font-size:14px;font-weight:400;color:#fff;text-align:center;letter-spacing:0.35px;-webkit-text-stroke:0.45px #fff;">Lưu</div>
</div>
<div class="a " style="left:960px;top:247.5px;width:287px;height:75px;box-shadow:0 0 0 4000px rgba(0,0,0,0.175), 0 0 3px 1px rgba(0,0,0,0.05);filter:blur(1.1px);"></div>
</body></html>
